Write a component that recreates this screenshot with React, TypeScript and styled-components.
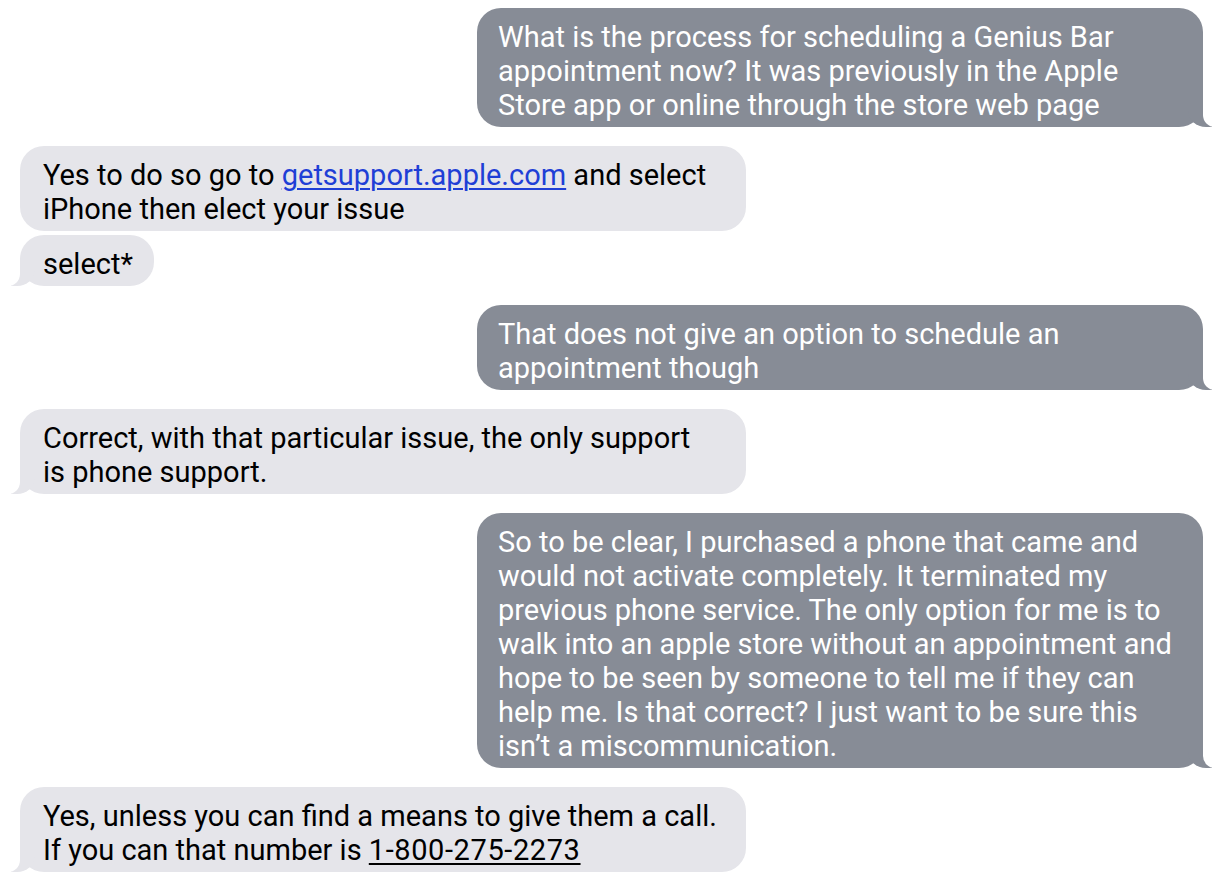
import React from "react";
import styled, { createGlobalStyle, css } from "styled-components";

const Global = createGlobalStyle`
  html, body { margin: 0; padding: 0; background: #ffffff; }
  body { font-family: Roboto, "Noto Sans", sans-serif; }
`;

const Thread = styled.div`
  display: flex;
  flex-direction: column;
  padding: 8px 21px 0 20px;
  width: 1224px;
  box-sizing: border-box;
`;

const Row = styled.div<{ $me: boolean; $tight: boolean }>`
  display: flex;
  justify-content: ${(p) => (p.$me ? "flex-end" : "flex-start")};
  margin-top: ${(p) => (p.$tight ? "4px" : "19px")};
  &:first-child { margin-top: 0; }
`;

const Bubble = styled.div<{ $me: boolean; $wide: boolean; $tail: boolean }>`
  position: relative;
  box-sizing: border-box;
  width: ${(p) => (p.$wide ? "726px" : "auto")};
  padding: 12px 21px 5px ${(p) => (p.$me ? "21px" : "23px")};
  border-radius: 24px;
  font-size: 29px;
  line-height: 34px;
  background: ${(p) => (p.$me ? "#878c96" : "#e5e5ea")};
  color: ${(p) => (p.$me ? "#ffffff" : "#000000")};
  ${(p) =>
    p.$tail &&
    (p.$me
      ? css`
          &::before {
            content: "";
            position: absolute;
            bottom: 0;
            right: -9px;
            width: 24px;
            height: 26px;
            background: #878c96;
            border-bottom-left-radius: 18px 16px;
          }
          &::after {
            content: "";
            position: absolute;
            bottom: 0;
            right: -30px;
            width: 30px;
            height: 26px;
            background: #ffffff;
            border-bottom-left-radius: 12px;
          }
        `
      : css`
          &::before {
            content: "";
            position: absolute;
            bottom: 0;
            left: -9px;
            width: 24px;
            height: 26px;
            background: #e5e5ea;
            border-bottom-right-radius: 18px 16px;
          }
          &::after {
            content: "";
            position: absolute;
            bottom: 0;
            left: -30px;
            width: 30px;
            height: 26px;
            background: #ffffff;
            border-bottom-right-radius: 12px;
          }
        `)}
`;

const Line = styled.span`
  display: block;
  white-space: nowrap;
  position: relative;
  z-index: 1;
`;

const Link = styled.span`
  color: #1f3fd6;
  text-decoration: underline;
  text-underline-offset: 3px;
  text-decoration-thickness: 2px;
`;

const Phone = styled.span`
  text-decoration: underline;
  text-underline-offset: 3px;
  text-decoration-thickness: 2px;
  letter-spacing: 0.6px;
`;

type Msg = {
  me: boolean;
  wide: boolean;
  tail: boolean;
  tight?: boolean;
  lines: React.ReactNode[];
};

const messages: Msg[] = [
  {
    me: true,
    wide: true,
    tail: true,
    lines: [
      "What is the process for scheduling a Genius Bar",
      "appointment now? It was previously in the Apple",
      "Store app or online through the store web page",
    ],
  },
  {
    me: false,
    wide: true,
    tail: false,
    lines: [
      <>
        Yes to do so go to <Link>getsupport.apple.com</Link> and select
      </>,
      "iPhone then elect your issue",
    ],
  },
  { me: false, wide: false, tail: true, tight: true, lines: ["select*"] },
  {
    me: true,
    wide: true,
    tail: true,
    lines: ["That does not give an option to schedule an", "appointment though"],
  },
  {
    me: false,
    wide: true,
    tail: true,
    lines: [
      "Correct, with that particular issue, the only support",
      "is phone support.",
    ],
  },
  {
    me: true,
    wide: true,
    tail: true,
    lines: [
      "So to be clear, I purchased a phone that came and",
      "would not activate completely. It terminated my",
      "previous phone service. The only option for me is to",
      "walk into an apple store without an appointment and",
      "hope to be seen by someone to tell me if they can",
      "help me. Is that correct? I just want to be sure this",
      "isn\u2019t a miscommunication.",
    ],
  },
  {
    me: false,
    wide: true,
    tail: true,
    lines: [
      "Yes, unless you can find a means to give them a call.",
      <>
        If you can that number is <Phone>1-800-275-2273</Phone>
      </>,
    ],
  },
];

export default function App() {
  return (
    <>
      <Global />
      <Thread>
        {messages.map((m, i) => (
          <Row key={i} $me={m.me} $tight={!!m.tight}>
            <Bubble $me={m.me} $wide={m.wide} $tail={m.tail}>
              {m.lines.map((l, j) => (
                <Line key={j}>{l}</Line>
              ))}
            </Bubble>
          </Row>
        ))}
      </Thread>
    </>
  );
}
